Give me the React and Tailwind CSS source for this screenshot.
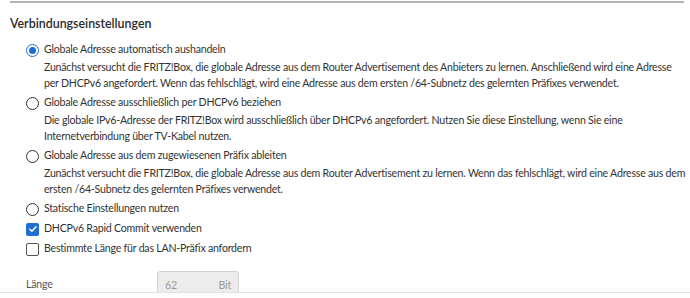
const font = { fontFamily: 'Lato, "Liberation Sans", sans-serif' }

function Radio({ checked }) {
  return checked ? (
    <span className="flex h-[13px] w-[13px] shrink-0 items-center justify-center rounded-full border-[1.5px] border-[#1e6fd1]">
      <span className="h-[7px] w-[7px] rounded-full bg-[#1e6fd1]" />
    </span>
  ) : (
    <span className="h-[13px] w-[13px] shrink-0 rounded-full border-[1.5px] border-[#333]" />
  )
}

function Checkbox({ checked }) {
  return checked ? (
    <span className="flex h-[13px] w-[13px] shrink-0 items-center justify-center rounded-[2px] bg-[#1e6fd1]">
      <svg viewBox="0 0 12 12" className="h-[10px] w-[10px]" fill="none" stroke="white" strokeWidth="1.8" strokeLinecap="round" strokeLinejoin="round">
        <path d="M2.2 6.3l2.5 2.4 5-5.4" />
      </svg>
    </span>
  ) : (
    <span className="h-[13px] w-[13px] shrink-0 rounded-[2px] border-[1.5px] border-[#555]" />
  )
}

const options = [
  {
    label: 'Globale Adresse automatisch aushandeln',
    checked: true,
    lines: [
      'Zunächst versucht die FRITZ!Box, die globale Adresse aus dem Router Advertisement des Anbieters zu lernen. Anschließend wird eine Adresse',
      'per DHCPv6 angefordert. Wenn das fehlschlägt, wird eine Adresse aus dem ersten /64-Subnetz des gelernten Präfixes verwendet.',
    ],
  },
  {
    label: 'Globale Adresse ausschließlich per DHCPv6 beziehen',
    lines: [
      'Die globale IPv6-Adresse der FRITZ!Box wird ausschließlich über DHCPv6 angefordert. Nutzen Sie diese Einstellung, wenn Sie eine',
      'Internetverbindung über TV-Kabel nutzen.',
    ],
  },
  {
    label: 'Globale Adresse aus dem zugewiesenen Präfix ableiten',
    lines: [
      'Zunächst versucht die FRITZ!Box, die globale Adresse aus dem Router Advertisement zu lernen. Wenn das fehlschlägt, wird eine Adresse aus dem',
      'ersten /64-Subnetz des gelernten Präfixes verwendet.',
    ],
  },
]

export default function App() {
  return (
    <div className="h-[298px] w-[690px] overflow-hidden bg-white text-[#333] tracking-[-0.22px]" style={font}>
      <div className="h-[292px] overflow-hidden">
        <div className="mt-[1px] ml-[10px] mr-[6px] border-t-2 border-[#b4b4b4] pt-[11px]">
          <h2 className="h-[20px] text-[12.4px] font-semibold leading-[20px] tracking-normal text-[#2b2b2b]">
            Verbindungseinstellungen
          </h2>
        </div>

        <div className="mt-[6px] ml-[26px] flex flex-col text-[10.6px]">
          {options.map((option) => (
            <div key={option.label} className="mb-[2px]">
              <label className="flex h-[20px] items-center gap-[5px]">
                <Radio checked={option.checked} />
                <span>{option.label}</span>
              </label>
              <div className="-mt-[1px] ml-[18px] whitespace-nowrap leading-[16px]">
                {option.lines.map((line) => (
                  <div key={line}>{line}</div>
                ))}
              </div>
            </div>
          ))}
          <label className="flex h-[20px] items-center gap-[5px]">
            <Radio />
            <span>Statische Einstellungen nutzen</span>
          </label>
          <label className="flex h-[20px] items-center gap-[5px]">
            <Checkbox checked />
            <span>DHCPv6 Rapid Commit verwenden</span>
          </label>
          <label className="flex h-[20px] items-center gap-[5px]">
            <Checkbox />
            <span>Bestimmte Länge für das LAN-Präfix anfordern</span>
          </label>

          <div className="mt-[12px] flex items-start">
            <span className="w-[131px] pt-[6px] text-[#555]">Länge</span>
            <div className="flex h-[28px] w-[82px] items-start justify-between rounded-t-[3px] border border-[#d2d2d2] bg-[#ececec] px-[7px] pt-[6px] text-[#9a9a9a]">
              <span>62</span>
              <span>Bit</span>
            </div>
          </div>
        </div>
      </div>
      <div className="h-[6px] border-t border-[#e3e3e3] bg-[#fdfdfd]" />
    </div>
  )
}
